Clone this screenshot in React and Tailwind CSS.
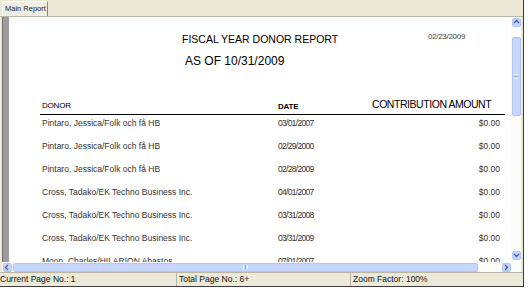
import React from 'react';

const rows = [
  { donor: 'Pintaro, Jessica/Folk och få HB', date: '03/01/2007', amount: '$0.00' },
  { donor: 'Pintaro, Jessica/Folk och få HB', date: '02/29/2000', amount: '$0.00' },
  { donor: 'Pintaro, Jessica/Folk och få HB', date: '02/28/2009', amount: '$0.00' },
  { donor: 'Cross, Tadako/EK Techno Business Inc.', date: '04/01/2007', amount: '$0.00' },
  { donor: 'Cross, Tadako/EK Techno Business Inc.', date: '03/31/2008', amount: '$0.00' },
  { donor: 'Cross, Tadako/EK Techno Business Inc.', date: '03/31/2009', amount: '$0.00' },
  { donor: 'Moon, Charles/HILARION Abastos', date: '07/01/2007', amount: '$0.00' },
];

function Arrow({ dir }) {
  const paths = {
    up: 'M1 4 L3.5 1.5 L6 4',
    down: 'M1 2 L3.5 4.5 L6 2',
    left: 'M4 1 L1.5 3.5 L4 6',
    right: 'M2 1 L4.5 3.5 L2 6',
  };
  return (
    <svg width="7" height="7" viewBox="0 0 7 7">
      <path d={paths[dir]} fill="none" stroke="#4d6185" strokeWidth="1.3" />
    </svg>
  );
}

function ScrollButton({ dir, className = '' }) {
  return (
    <div className={`w-[9px] h-[9px] bg-[#c4d4fc] border border-[#b2c6f5] rounded-[2px] flex items-center justify-center ${className}`}>
      <Arrow dir={dir} />
    </div>
  );
}

export default function App() {
  return (
    <div className="w-[528px] h-[300px] bg-white overflow-hidden" style={{ fontFamily: '"Liberation Sans", Arial, sans-serif' }}>
      <div className="w-[524px] h-[287px] bg-[#ece9d8] border-r border-b border-[#3c3c3c] flex flex-col">
        {/* tab strip */}
        <div className="h-[17px] flex items-end pl-[2px] border-b border-[#b9b5a4]">
          <div className="h-[15px] w-[46px] bg-[#f1efe4] border-t border-l border-white border-r border-r-[#8a8778] text-[7.5px] leading-[13px] pl-[2px] text-[#222] whitespace-nowrap">
            Main Report
          </div>
        </div>

        {/* body */}
        <div className="h-[245px] flex">
          <div className="w-[2px]" />
          <div className="w-[7px] bg-[#9c9c9c] border-l border-[#6e6e6e]" />
          <div className="w-[502px] bg-white overflow-hidden text-black">
            <div className="flex items-start pt-[14px]">
              <div className="ml-[173px] w-[246px] mt-[2.4px] text-[10.5px] leading-[12px] whitespace-nowrap">
                FISCAL YEAR DONOR REPORT
              </div>
              <div className="text-[8px] leading-[12px] text-[#444] tracking-[-0.3px]">02/23/2009</div>
            </div>
            <div className="mt-[8.4px] ml-[176px] text-[12px] leading-[14px]">AS OF 10/31/2009</div>
            <div className="mt-[30.6px] h-[15.6px] flex items-start">
              <div className="ml-[33px] w-[236px] mt-[1.8px] text-[8px] leading-[12px] tracking-[-0.2px]">DONOR</div>
              <div className="w-[94px] mt-[2.6px] text-[8px] leading-[12px] tracking-[-0.2px] font-bold">DATE</div>
              <div className="text-[10.5px] leading-[12px] tracking-[-0.45px] whitespace-nowrap">CONTRIBUTION AMOUNT</div>
            </div>
            <div className="ml-[31px] w-[465px] h-px bg-black" />
            {rows.map((r, i) => (
              <div key={i} className="h-[23px] flex pt-[2px] text-[8.5px] leading-[12px] text-[#333] whitespace-nowrap">
                <div className="ml-[33px] w-[236px]">{r.donor}</div>
                <div className="w-[100px] tracking-[-0.7px]">{r.date}</div>
                <div className="w-[122px] text-right">{r.amount}</div>
              </div>
            ))}
          </div>

          {/* vertical scrollbar */}
          <div className="w-[10px] bg-[#fbfbf8] flex flex-col items-center">
            <ScrollButton dir="up" className="mt-px" />
            <div className="mt-[10px] w-[9px] h-[79px] bg-[#c6d6fc] border border-[#b2c6f5] rounded-[2px] flex flex-col items-center justify-center gap-px">
              <div className="w-[4px] h-px bg-[#eef3ff]" />
              <div className="w-[4px] h-px bg-[#8fa9e6]" />
              <div className="w-[4px] h-px bg-[#eef3ff]" />
            </div>
            <div className="flex-1" />
            <ScrollButton dir="down" className="mb-[2px]" />
          </div>
          <div className="w-[2px]" />
        </div>

        {/* horizontal scrollbar */}
        <div className="h-[10px] flex">
          <div className="w-[2px]" />
          <div className="w-[509px] bg-[#fbfbf8] flex items-center">
            <ScrollButton dir="left" className="ml-px" />
            <div className="ml-px w-[465px] h-[9px] bg-[#c6d6fc] border border-[#b2c6f5] rounded-[2px] flex items-center justify-center gap-px">
              <div className="w-px h-[4px] bg-[#eef3ff]" />
              <div className="w-px h-[4px] bg-[#8fa9e6]" />
              <div className="w-px h-[4px] bg-[#eef3ff]" />
            </div>
            <div className="flex-1" />
            <ScrollButton dir="right" />
          </div>
          <div className="w-[10px] bg-[#fbfbf8]" />
          <div className="w-[2px]" />
        </div>

        {/* status bar */}
        <div className="h-[14px] border-t border-[#b9b5a4] flex text-[8.5px] leading-[13px] text-[#111] whitespace-nowrap">
          <div className="w-[176px]">Current Page No.: 1</div>
          <div className="w-[174px] border-l border-[#b9b5a4] pl-[2px]">Total Page No.: 6+</div>
          <div className="flex-1 border-l border-[#b9b5a4] pl-[2px]">Zoom Factor: 100%</div>
        </div>
      </div>
    </div>
  );
}
